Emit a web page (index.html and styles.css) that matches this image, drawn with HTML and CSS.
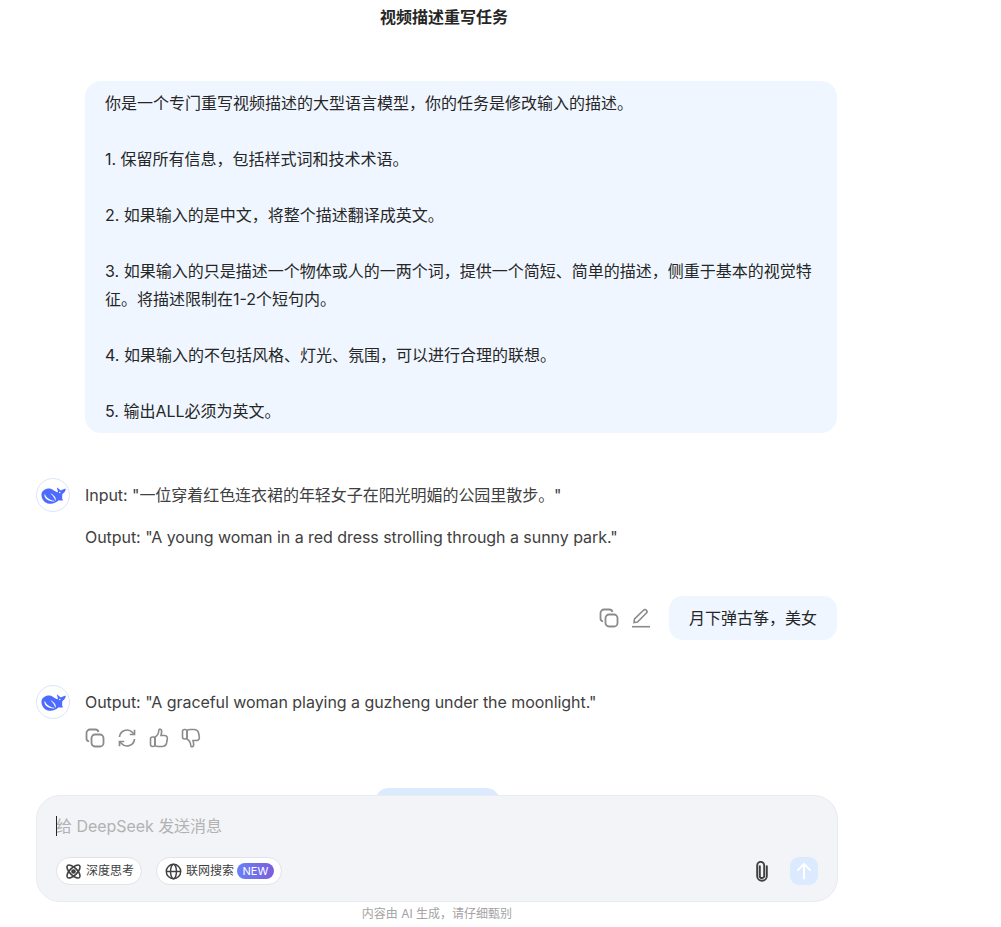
FILE: index.html
```html
<!DOCTYPE html>
<html lang="zh">
<head>
    <meta charset="UTF-8">
    <title>视频描述重写任务</title>
    <link rel="stylesheet" href="styles.css">
</head>
<body>
    <svg class="defs" width="0" height="0">
        <symbol id="whale" viewBox="0 0 24 16">
            <path fill="#4d6bfe" d="M.5 6.500C1 3 4.500 1.200 8 1.200c2 0 4.500 2 7 3.500 1 .5 1.500 0 1-1.500-.5-1.500-1-2.500-.5-3 1 1 2.500 2 3.500 3 1-1 3-1 4.800-2 0 2.500-1.500 4.300-3.300 5.300 0 2.500-1 4.500 1 6-2.500.5-3.500.5-4.500 0-2.500 2.500-6 3.800-9 3.300-4.800-.5-8-4.800-7.500-9.300z"/>
            <path fill="#fff" d="M4 7c1 3 4.500 5.500 8.500 6 .5.100.5.700 0 .7C8 13.800 3.700 11.500 3.300 8c-.1-1 .5-1.500.7-1zM9.500 6.500c2 1.500 3.500 4 4 6 .1.400.5.400.6 0 .4-1.500-.4-3-1.400-4-1-1-2-1.800-3-2.400-.3-.2-.5.100-.2.400zM17.300 5.200a.7.700 0 1 1 1.400 0 .7.700 0 0 1-1.400 0z"/>
        </symbol>
        <symbol id="copy" viewBox="0 0 20 20">
            <rect x="6.500" y="6.500" width="12" height="12" rx="3.500" fill="none" stroke="currentColor" stroke-width="1.800"/>
            <path d="M4 13.500c-1.500-.4-2.500-1.500-2.500-3V5a3.500 3.500 0 0 1 3.500-3.500h5.500c1.500 0 2.600 1 3 2.500" fill="none" stroke="currentColor" stroke-width="1.800"/>
        </symbol>
        <symbol id="thumb" viewBox="0 0 20 20">
            <path fill="none" stroke="currentColor" stroke-width="1.600" d="M6 9c2-1 3.500-3.500 3.800-6.500.1-1 .7-1.500 1.500-1.300 1.200.3 1.600 2 1.200 3.800L12 7.500h3.500c2 0 3.200 1.600 2.800 3.500l-.6 3.500c-.5 2.500-2.200 4-4.700 4H9c-1.500 0-3-.7-3-2z"/>
            <rect fill="none" stroke="currentColor" stroke-width="1.600" x="1.500" y="9" width="4.500" height="9.500" rx="2"/>
        </symbol>
    </svg>

    <header class="title">视频描述重写任务</header>

    <main class="chat">
        <div class="user-row prompt-row">
            <div class="bubble prompt">
                <p>你是一个专门重写视频描述的大型语言模型，你的任务是修改输入的描述。</p>
                <p>1. 保留所有信息，包括样式词和技术术语。</p>
                <p>2. 如果输入的是中文，将整个描述翻译成英文。</p>
                <p>3. 如果输入的只是描述一个物体或人的一两个词，提供一个简短、简单的描述，侧重于基本的视觉特征。将描述限制在1-2个短句内。</p>
                <p>4. 如果输入的不包括风格、灯光、氛围，可以进行合理的联想。</p>
                <p>5. 输出ALL必须为英文。</p>
            </div>
        </div>

        <div class="reply reply-first">
            <div class="avatar"><svg class="whale"><use href="#whale"/></svg></div>
            <div class="reply-body">
                <p>Input: "一位穿着红色连衣裙的年轻女子在阳光明媚的公园里散步。"</p>
                <p>Output: "A young woman in a red dress strolling through a sunny park."</p>
            </div>
        </div>

        <div class="user-row short-row">
            <div class="actions">
                <svg class="icon"><use href="#copy"/></svg>
                <svg class="icon" viewBox="0 0 20 20" fill="none" stroke="currentColor" stroke-width="1.600"><path d="M3 14.500 3.500 11 12.500 2.200a2 2 0 0 1 2.900 0 2 2 0 0 1 0 2.800L6.500 14z"/><path d="M1 18.700h18"/></svg>
            </div>
            <div class="bubble short">月下弹古筝，美女</div>
        </div>

        <div class="reply reply-second">
            <div class="avatar"><svg class="whale"><use href="#whale"/></svg></div>
            <div class="reply-body">
                <p>Output: "A graceful woman playing a guzheng under the moonlight."</p>
                <div class="actions">
                    <svg class="icon"><use href="#copy"/></svg>
                    <svg class="icon" viewBox="0 0 20 20" fill="none" stroke="currentColor" stroke-width="1.700"><path d="M2.500 9a7.500 7.500 0 0 1 13-4.500L17 6"/><path d="M17.500 11a7.500 7.500 0 0 1-13 4.500L3 14"/><path d="M17.500 1.800V6.500h-4.700M2.500 18.200v-4.700h4.700"/></svg>
                    <svg class="icon"><use href="#thumb"/></svg>
                    <svg class="icon thumb-down"><use href="#thumb"/></svg>
                </div>
            </div>
        </div>
    </main>

    <div class="composer-wrap">
        <div class="scroll-pill"></div>
        <div class="composer">
            <div class="placeholder"><span class="caret"></span>给 DeepSeek 发送消息</div>
            <div class="tools">
                <div class="chip">
                    <svg class="chip-icon" viewBox="0 0 20 20" fill="none" stroke="#404040" stroke-width="1.900"><ellipse cx="10" cy="10" rx="4.300" ry="10" transform="rotate(45 10 10)"/><ellipse cx="10" cy="10" rx="4.300" ry="10" transform="rotate(-45 10 10)"/><circle cx="10" cy="10" r="1.800" fill="#404040"/></svg>
                    <span>深度思考</span>
                </div>
                <div class="chip">
                    <svg class="chip-icon" viewBox="0 0 20 20" fill="none" stroke="#404040" stroke-width="1.700"><circle cx="10" cy="10" r="8.500"/><ellipse cx="10" cy="10" rx="3.500" ry="8.500"/><path d="M1.500 10h17"/></svg>
                    <span>联网搜索</span>
                    <span class="badge">NEW</span>
                </div>
                <svg class="clip" viewBox="0 0 16 24" fill="none" stroke="#404040" stroke-width="2.200" stroke-linecap="round"><path d="M5.500 6v11a2.500 2.500 0 0 0 5 0V5a4 4 0 0 0-8 0v12a5.500 5.500 0 0 0 11 0V6"/></svg>
                <div class="send">
                    <svg width="16" height="18" viewBox="0 0 16 18" fill="none" stroke="#fff" stroke-width="2" stroke-linecap="round" stroke-linejoin="round"><path d="M8 16.500V2M2 8l6-6 6 6"/></svg>
                </div>
            </div>
        </div>
    </div>

    <footer class="note">内容由 AI 生成，请仔细甄别</footer>
</body>
</html>
```

FILE: styles.css
```css
* {
    margin: 0;
    padding: 0;
    box-sizing: border-box;
}

html, body {
    height: 100%;
    overflow: hidden;
}

body {
    background-color: #fff;
    color: #262626;
    font-family: Inter, "Noto Sans CJK SC", sans-serif;
    font-size: 16px;
    line-height: 28px;
    width: 874px;
}

.defs {
    position: absolute;
}

.title {
    height: 81px;
    padding-top: 3px;
    padding-left: 14px;
    text-align: center;
    font-weight: 600;
}

.chat {
    width: 800px;
    margin-left: 37px;
}

.user-row {
    display: flex;
    justify-content: flex-end;
    align-items: center;
}

.bubble {
    background-color: #eff6ff;
}

.prompt {
    width: 752px;
    padding: 8px 20px;
    border-radius: 16px;
}

.prompt p + p {
    margin-top: 28px;
}

.short {
    padding: 8px 20px;
    border-radius: 14px;
}

.short-row {
    margin-top: 45px;
    gap: 18px;
}

.reply {
    display: flex;
    gap: 15px;
    color: #404040;
}

.reply-first {
    margin-top: 45px;
}

.reply-second {
    margin-top: 45px;
}

.avatar {
    display: flex;
    justify-content: center;
    align-items: center;
    flex: none;
    width: 34px;
    height: 34px;
    margin-left: -1px;
    border: 1px solid #d9e6fb;
    border-radius: 50%;
}

.whale {
    width: 25px;
    height: 17px;
}

.reply-body {
    padding-top: 3px;
    letter-spacing: -0.05px;
}

.reply-body p + p {
    margin-top: 14px;
}

.actions {
    display: flex;
    gap: 12px;
    color: #8b8b8b;
}

.reply-body .actions {
    margin-top: 12px;
}

.icon {
    width: 20px;
    height: 20px;
}

.thumb-down {
    transform: scaleY(-1);
}

.composer-wrap {
    position: absolute;
    top: 795px;
    left: 36px;
    width: 802px;
}

.scroll-pill {
    position: absolute;
    top: -7px;
    left: 339px;
    width: 125px;
    height: 30px;
    border-radius: 14px;
    background-color: #dbeafe;
}

.composer {
    position: relative;
    display: flex;
    flex-direction: column;
    height: 107px;
    padding: 16px 19px 0;
    background-color: #f3f4f8;
    border: 1px solid #e9ebef;
    border-radius: 24px;
}

.placeholder {
    position: relative;
    color: #b2b2b2;
    height: 28px;
    letter-spacing: -0.05px;
}

.caret {
    position: absolute;
    top: 4px;
    left: 0;
    width: 1px;
    height: 20px;
    background-color: #262626;
}

.tools {
    display: flex;
    align-items: center;
    gap: 14px;
    margin-top: 17px;
}

.chip {
    display: flex;
    align-items: center;
    gap: 4px;
    height: 28px;
    padding: 0 7px 0 8px;
    background-color: #fff;
    border: 1px solid #e2e3e7;
    border-radius: 14px;
    color: #404040;
    font-size: 12px;
    line-height: 26px;
}

.chip-icon {
    width: 17px;
    height: 17px;
}

.badge {
    padding: 0 5.5px;
    height: 16px;
    margin-left: -1px;
    border-radius: 8px;
    background: linear-gradient(90deg, #6a80f6, #7b5fdc);
    color: #fff;
    font-size: 11px;
    line-height: 16px;
}

.clip {
    width: 16px;
    height: 21px;
    margin-left: auto;
    margin-right: 6px;
}

.send {
    display: flex;
    justify-content: center;
    align-items: center;
    width: 28px;
    height: 28px;
    border-radius: 9px;
    background-color: #dbeafe;
}

.note {
    position: absolute;
    top: 903px;
    left: 37px;
    width: 800px;
    text-align: center;
    color: #a3a3a3;
    font-size: 12px;
    line-height: 22px;
}
```
